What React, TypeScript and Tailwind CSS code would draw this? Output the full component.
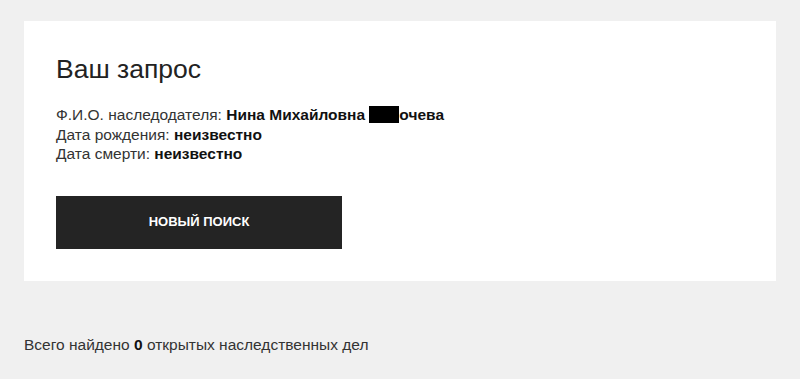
export default function App() {
  return (
    <div className="min-h-[379px] bg-[#f0f0f0] px-6 pt-[21px] font-['Liberation_Sans',Arial,sans-serif]">
      <section className="h-[260px] bg-white pl-8 pt-[33px]">
        <h1 className="text-[26.5px] leading-[30px] text-[#222]">Ваш запрос</h1>
        <div className="mt-[19px] text-[15.5px] leading-[19.5px] text-[#333]">
          <p>
            Ф.И.О. наследодателя:{" "}
            <b className="text-[#111]">
              Нина Михайловна{" "}
              <span className="inline-block h-[17px] w-[30px] translate-y-[3px] bg-black" />
              очева
            </b>
          </p>
          <p>
            Дата рождения: <b className="text-[#111]">неизвестно</b>
          </p>
          <p>
            Дата смерти: <b className="text-[#111]">неизвестно</b>
          </p>
        </div>
        <button className="mt-[32px] flex h-[53px] w-[286px] items-center justify-center bg-[#242424] text-[13px] font-bold uppercase text-white">
          Новый поиск
        </button>
      </section>
      <p className="mt-[52px] text-[15.5px] text-[#333]">
        Всего найдено <b className="text-[#111]">0</b> открытых наследственных дел
      </p>
    </div>
  );
}
